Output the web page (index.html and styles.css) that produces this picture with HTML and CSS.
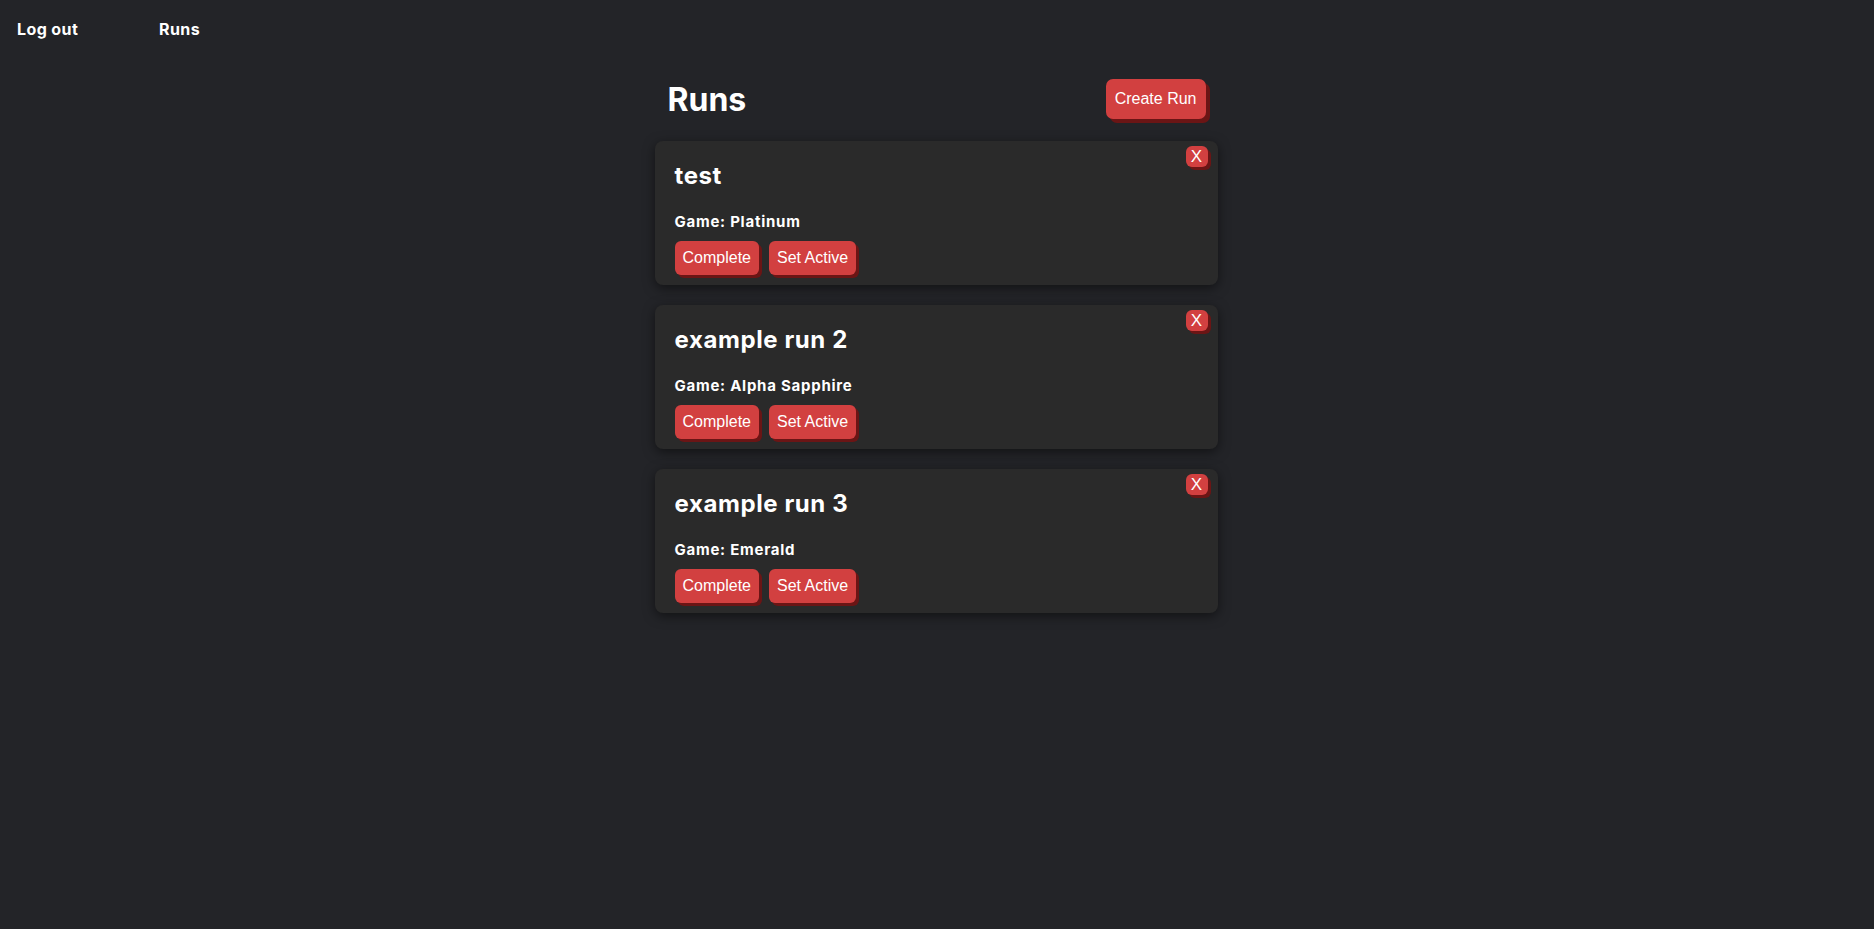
FILE: index.html
```html
<!DOCTYPE html>
<html lang="en">
<head>
<meta charset="utf-8">
<title>Runs</title>
<link rel="stylesheet" href="styles.css">
</head>
<body>
<nav class="topnav">
  <a class="nav-link nav-first" href="#">Log out</a>
  <a class="nav-link" href="#">Runs</a>
</nav>
<main class="runs">
  <div class="runs-header">
    <h1 class="runs-title">Runs</h1>
    <button class="btn btn-lg">Create Run</button>
  </div>
  <div class="run-card">
    <button class="btn btn-x">X</button>
    <h2 class="run-name">test</h2>
    <p class="run-game">Game: Platinum</p>
    <div class="run-actions">
      <button class="btn">Complete</button>
      <button class="btn">Set Active</button>
    </div>
  </div>
  <div class="run-card">
    <button class="btn btn-x">X</button>
    <h2 class="run-name">example run 2</h2>
    <p class="run-game">Game: Alpha Sapphire</p>
    <div class="run-actions">
      <button class="btn">Complete</button>
      <button class="btn">Set Active</button>
    </div>
  </div>
  <div class="run-card">
    <button class="btn btn-x">X</button>
    <h2 class="run-name">example run 3</h2>
    <p class="run-game">Game: Emerald</p>
    <div class="run-actions">
      <button class="btn">Complete</button>
      <button class="btn">Set Active</button>
    </div>
  </div>
</main>
</body>
</html>
```

FILE: styles.css
```css
html, body {
  margin: 0;
  padding: 0;
}
body {
  background: #232428;
  color: #ffffff;
  font-family: Inter, "Noto Sans", sans-serif;
  min-height: 929px;
}
.topnav {
  display: flex;
  padding: 19px 0 0 17px;
}
.nav-link {
  color: #ffffff;
  text-decoration: none;
  font-weight: 700;
  font-size: 16px;
  letter-spacing: 0.4px;
}
.nav-first {
  width: 142px;
}
.runs {
  width: 563px;
  margin: 40px auto 0;
  display: flex;
  flex-direction: column;
  gap: 20px;
  position: relative;
  left: -1px;
}
.runs-header {
  display: flex;
  align-items: center;
  justify-content: space-between;
  padding: 0 12px 0 13px;
  height: 40px;
  margin-bottom: 2px;
}
.runs-title {
  margin: 0;
  font-size: 32px;
  font-weight: 700;
}
.btn {
  font-family: "Liberation Sans", Arial, sans-serif;
  font-size: 16px;
  color: #ffffff;
  background: #d24040;
  border: none;
  border-radius: 6px;
  padding: 8px 8px;
  box-shadow: 3px 3px 0 #6b1515;
  cursor: pointer;
}
.btn-lg {
  padding: 11px 9px;
  border-radius: 7px;
  box-shadow: 4px 4px 0 #6b1515;
}
.run-card {
  position: relative;
  background: #2a2a2a;
  border-radius: 8px;
  padding: 20px 20px 10px;
  box-shadow: 0 3px 12px rgba(0, 0, 0, 0.5);
}
.btn-x {
  position: absolute;
  top: 5px;
  right: 10px;
  width: 22px;
  height: 21px;
  padding: 0;
  line-height: 21px;
  font-size: 17px;
  border-radius: 6px;
}
.run-name {
  margin: 0 0 22px;
  font-size: 24px;
  font-weight: 700;
  letter-spacing: 0.6px;
}
.run-game {
  margin: 0 0 10px;
  font-size: 15px;
  font-weight: 700;
  letter-spacing: 0.75px;
}
.run-actions {
  display: flex;
  gap: 10px;
}
```
